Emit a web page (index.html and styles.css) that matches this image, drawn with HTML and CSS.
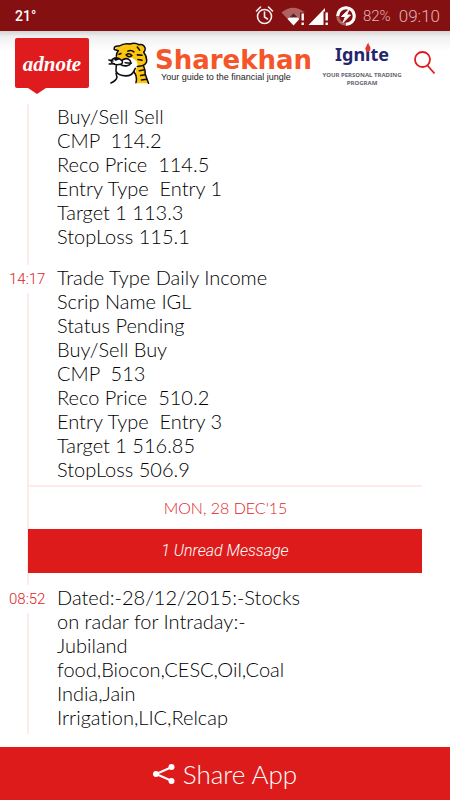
FILE: index.html
```html
<!DOCTYPE html>
<html lang="en">
<head>
<meta charset="utf-8">
<meta name="viewport" content="width=device-width, initial-scale=1">
<title>Sharekhan Ignite</title>
<link rel="stylesheet" href="styles.css">
</head>
<body>
<div class="status">
  <span class="temp">21°</span>
  <svg class="status-icons" width="102" height="24" viewBox="0 0 102 24" aria-hidden="true">
    <g fill="none" stroke="#f8eeee" stroke-width="1.6" stroke-linecap="round">
      <circle cx="9.500" cy="12.500" r="7"/>
      <path d="M9.500 8v5l3 2M1.500 7l4-4M17.500 7l-4-4"/>
    </g>
    <path d="M26.500 8.500Q38 -1 50 8.500H45V14h-2l-4.500-5-6 6z" fill="#b26060"/>
    <path d="M38.500 9l6 6-6 6.500-6-6.500z" fill="#fff"/>
    <path d="M38.500 9l4.500 4.500h-9z" fill="#602028"/>
    <path d="M46.500 9.500h2.400v7h-2.400zM46.500 18.500h2.400v2.500h-2.400z" fill="#fff"/>
    <path d="M53.500 21L70 4v3.500h-1.500V21z" fill="#fff"/>
    <path d="M70.500 8.500h2.400v8h-2.400zM70.500 18.500h2.400V21h-2.400z" fill="#fff"/>
    <circle cx="91" cy="12" r="8.300" fill="none" stroke="#b26060" stroke-width="3"/>
    <path d="M82.700 12a8.300 8.300 0 1 1 8.300 8.300" fill="none" stroke="#fff" stroke-width="3"/>
    <path d="M94 5.500l-7.500 7h4l-2.500 6 7.500-7.500h-3.800z" fill="#fff" stroke="#fff"/>
  </svg>
  <span class="battery">82%</span>
  <span class="clock">09:10</span>
</div>

<header class="header">
  <a class="adnote" href="#">adnote</a>
  <a class="brand" href="#">
    <svg width="43" height="42" viewBox="22 14 124 124" aria-hidden="true">
      <path d="M50 66Q45 50 56 34Q62 20 78 21Q94 14 108 20Q122 16 130 28Q134 36 130 44Q142 60 136 76Q132 86 112 86L108 70 92 60 70 66z" fill="#fdc50d"/>
      <path d="M107 88Q122 86 132 80L134 108 143 136H108L104 112z" fill="#fdc50d"/>
      <path d="M44 30Q52 24 62 30L52 42z" fill="#fdc50d"/>
      <path d="M30 68Q40 58 66 66Q84 60 90 74Q106 78 110 86Q98 112 74 114Q50 114 47 92Q34 86 30 68z" fill="#fff"/>
      <g fill="none" stroke="#0d0d12" stroke-width="4.500" stroke-linecap="round" stroke-linejoin="round">
        <path d="M48 56Q48 46 54 40L42 36Q40 24 56 26Q72 16 88 20Q104 14 114 22Q128 18 133 32Q134 40 129 44Q140 58 137 74Q132 86 110 86"/>
        <path d="M42 62Q52 58 64 68Q70 76 60 80Q46 84 36 76Q28 68 42 62zM64 68Q78 58 88 68Q96 80 80 84Q68 86 60 80"/>
        <path d="M26 67L38 70M27 79L42 78M74 75L92 77"/>
        <path d="M48 82L47 100Q54 114 76 114Q94 114 100 100L104 92M47 106L50 118Q48 128 32 135"/>
        <path d="M56 50L62 48M77 52Q86 44 94 54Q86 60 80 55M82 41Q92 36 100 43M110 29L117 38M110 52L124 53M112 66L124 68"/>
        <path d="M100 101Q111 117 106 134M129 87Q134 97 133 108L143 136M128 97L116 99M133 111L120 113M137 124L122 126"/>
      </g>
      <path d="M38 62Q48 56 58 65L46 70z" fill="#0d0d12"/>
    </svg>
    <span class="brand-text">
      <span class="brand-name">Sharekhan</span>
      <span class="brand-tag">Your guide to the financial jungle</span>
    </span>
  </a>
  <div class="ignite">
    <span class="ignite-name">Ign<span class="flame-letter">i<svg class="flame" width="6" height="10" viewBox="0 0 6 10" aria-hidden="true"><path d="M3.500 0Q3 2 5 4.500Q6.500 8 3.500 10H2.500Q-1 8 1 5Q2 3.500 1.800 2.500Q3 2 3.500 0z" fill="#e2392c"/></svg></span>te</span>
    <span class="ignite-tag">YOUR PERSONAL TRADING PROGRAM</span>
  </div>
  <button class="search" type="button" aria-label="Search">
    <svg width="22" height="24" viewBox="0 0 22 24" aria-hidden="true"><g fill="none" stroke="#e01b1c" stroke-width="1.800"><circle cx="8.500" cy="8.500" r="7.500"/><path d="M13.500 14.500L20.500 22.500"/></g></svg>
  </button>
</header>

<main class="timeline">
  <article class="entry">
    <p class="message">Buy/Sell Sell<br>CMP&nbsp; 114.2<br>Reco Price&nbsp; 114.5<br>Entry Type&nbsp; Entry 1<br>Target 1 113.3<br>StopLoss 115.1</p>
  </article>
  <article class="entry">
    <time class="time">14:17</time>
    <p class="message">Trade Type Daily Income<br>Scrip Name IGL<br>Status Pending<br>Buy/Sell Buy<br>CMP&nbsp; 513<br>Reco Price&nbsp; 510.2<br>Entry Type&nbsp; Entry 3<br>Target 1 516.85<br>StopLoss 506.9</p>
  </article>
  <h2 class="date">MON, 28 DEC'15</h2>
  <div class="unread">1 Unread Message</div>
  <article class="entry latest">
    <time class="time">08:52</time>
    <p class="message">Dated:-28/12/2015:-Stocks<br>on radar for Intraday:-<br>Jubiland<br>food,Biocon,CESC,Oil,Coal<br>India,Jain<br>Irrigation,LIC,Relcap</p>
  </article>
</main>

<button class="share" type="button">
  <svg width="22" height="20" viewBox="0 0 22 20" aria-hidden="true"><path d="M19 3L3 10L19 17" fill="none" stroke="#fff" stroke-width="2"/><g fill="#fff"><circle cx="18.500" cy="3" r="3"/><circle cx="3" cy="10" r="3"/><circle cx="18.500" cy="17" r="3"/></g></svg>
  Share App
</button>
</body>
</html>
```
FILE: styles.css
```css
* { box-sizing: border-box; }
body {
  margin: 0;
  min-height: 100vh;
  display: flex;
  flex-direction: column;
  background: #fff;
  color: #000;
  font-family: Lato, "Open Sans", sans-serif;
  font-weight: 300;
  font-variant-ligatures: none;
}
a { color: inherit; text-decoration: none; }
button { border: 0; padding: 0; background: none; font: inherit; cursor: pointer; }

.status {
  height: 31px;
  padding: 0 10px 0 15px;
  display: flex;
  align-items: center;
  background: #851011;
  color: #e0b4b4;
  font-family: Roboto, sans-serif;
}
.temp { color: #fff; font: 500 14px Roboto, sans-serif; }
.status-icons { margin-left: auto; }
.battery { margin-left: 6px; font-size: 15px; }
.clock { margin-left: 8px; font-size: 17px; }

.header {
  height: 67px;
  padding: 7px 14px 0 15px;
  display: flex;
  align-items: flex-start;
  background: linear-gradient(#d4d4d4, #f1f1f1 6px, #fff 20px);
}
.adnote {
  position: relative;
  width: 74px;
  height: 50px;
  border-radius: 2px;
  background: #e01b1e;
  color: #fff;
  font: italic bold 21px/52px "Liberation Serif", serif;
  text-align: center;
}
.adnote::after {
  content: "";
  position: absolute;
  left: 13px;
  top: 50px;
  border: solid transparent;
  border-width: 6px 9px 0;
  border-top-color: #e01b1e;
}
.brand { margin-left: 18px; padding-top: 4px; display: flex; gap: 5px; }
.brand-text { display: flex; flex-direction: column; padding-top: 6px; }
.brand-name {
  color: #f4562a;
  font: bold 26px/24px "DejaVu Sans", sans-serif;
}
.brand-tag {
  padding-left: 6px;
  color: #222;
  font: 9px/10px "Liberation Sans", sans-serif;
}
.ignite {
  flex: 1;
  display: flex;
  flex-direction: column;
  align-items: center;
  padding-left: 4px;
  text-align: center;
}
.ignite-name { color: #26256c; font: bold 18px/33px "Noto Sans", sans-serif; }
.flame-letter { position: relative; }
.flame { position: absolute; left: 0; top: 0; }
.ignite-tag { color: #66666f; width: 90px; font: bold 6px/8px "Noto Sans", sans-serif; }
.search { margin: 13px 0 0 6px; height: 24px; }

.timeline {
  flex: 1;
  margin: 6px 28px 13px 27px;
  border-left: 2px solid #ffeaea;
}
.entry { position: relative; padding-left: 28px; margin-bottom: 17px; }
.message { margin: 0; font-size: 20px; line-height: 24px; }
.time {
  position: absolute;
  left: -20px;
  top: 0;
  padding: 1px 0;
  background: #fff;
  color: #e01b1e;
  font: 300 15px/26px Roboto, sans-serif;
}
.date {
  margin: -13px 0 0;
  border-top: 2px solid #ffeaea;
  color: #e01b1e;
  font-size: 16px;
  font-weight: 300;
  line-height: 42px;
  text-align: center;
}
.unread {
  margin: 0 0 12px -1px;
  background: #de1b1b;
  color: #fff;
  font: italic 300 16px/44px Roboto, sans-serif;
  text-align: center;
}
.latest { margin-bottom: 0; }

.share {
  height: 53px;
  width: 100%;
  display: flex;
  align-items: center;
  justify-content: center;
  gap: 8px;
  background: #de1b1b;
  color: #fff;
  font-size: 26px;
}
```
